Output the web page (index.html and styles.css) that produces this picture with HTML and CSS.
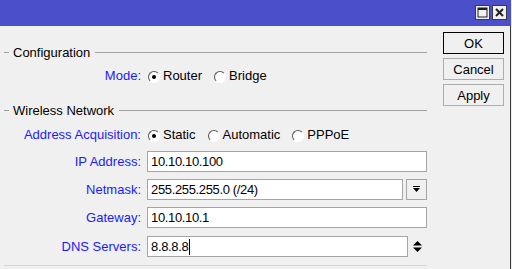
FILE: index.html
```html
<!DOCTYPE html>
<html lang="en">
<head>
    <meta charset="UTF-8">
    <title>Quick Set</title>
    <link rel="stylesheet" href="styles.css">
</head>
<body>
    <div class="window">
        <div class="titlebar">
            <span class="tb-btn">
                <svg width="11" height="11" viewBox="0 0 11 11"><rect x="1" y="1" width="9" height="9" fill="none" stroke="#222" stroke-width="1"/><rect x="1" y="1" width="9" height="2" fill="#222"/></svg>
            </span>
            <span class="tb-btn">
                <svg width="11" height="11" viewBox="0 0 11 11"><path d="M2 2 L9 9 M9 2 L2 9" stroke="#222" stroke-width="2"/></svg>
            </span>
        </div>
        <div class="frame">
            <div class="main">
                <div class="group-head head-config"><span>Configuration</span></div>
                <div class="row row-mode">
                    <label class="lbl">Mode:</label>
                    <div class="radios">
                        <span class="radio checked"><i></i>Router</span>
                        <span class="radio"><i></i>Bridge</span>
                    </div>
                </div>

                <div class="group-head head-wireless"><span>Wireless Network</span></div>
                <div class="row row-acq">
                    <label class="lbl">Address Acquisition:</label>
                    <div class="radios">
                        <span class="radio checked"><i></i>Static</span>
                        <span class="radio"><i></i>Automatic</span>
                        <span class="radio"><i></i>PPPoE</span>
                    </div>
                </div>
                <div class="row row-field">
                    <label class="lbl">IP Address:</label>
                    <div class="field">10.10.10.100</div>
                </div>
                <div class="row row-field">
                    <label class="lbl">Netmask:</label>
                    <div class="field">255.255.255.0 (/24)</div>
                    <span class="drop-btn">
                        <svg width="9" height="9" viewBox="0 0 9 9"><rect x="1" y="1" width="7" height="1" fill="#000"/><path d="M1 3 H8 L4.5 7 Z" fill="#000"/></svg>
                    </span>
                </div>
                <div class="row row-field">
                    <label class="lbl">Gateway:</label>
                    <div class="field">10.10.10.1</div>
                </div>
                <div class="row row-field row-dns">
                    <label class="lbl">DNS Servers:</label>
                    <div class="field">8.8.8.8<span class="caret"></span></div>
                    <span class="spin">
                        <svg width="11" height="13" viewBox="0 0 11 13"><path d="M5.5 1 L10 5.5 H1 Z" fill="#000"/><path d="M1 7.5 H10 L5.5 12 Z" fill="#000"/></svg>
                    </span>
                </div>
                <div class="bottom-line"></div>
            </div>
            <div class="side">
                <button class="btn btn-default">OK</button>
                <button class="btn">Cancel</button>
                <button class="btn">Apply</button>
            </div>
        </div>
    </div>
</body>
</html>
```

FILE: styles.css
```css
body {
    margin: 0;
    background: #f0f0f0;
    font-family: "Liberation Sans", Arial, sans-serif;
    font-size: 13px;
    color: #000000;
}
.window {
    width: 511px;
    height: 269px;
    display: flex;
    flex-direction: column;
}
.titlebar {
    height: 26px;
    background: #4b4fc9;
    display: flex;
    justify-content: flex-end;
    align-items: flex-start;
    padding: 5px 4px 0 0;
    gap: 2px;
    box-sizing: border-box;
}
.tb-btn {
    width: 15px;
    height: 15px;
    box-sizing: border-box;
    border: 1px solid #3a3a3a;
    background: #f0f0f0;
    display: flex;
    justify-content: center;
    align-items: center;
}
.frame {
    flex: 1;
    display: flex;
    border-right: 1px solid #3a3a3a;
}
.main {
    width: 423px;
    margin-left: 4px;
    padding-top: 16px;
}
.group-head {
    height: 20px;
    display: flex;
    align-items: center;
}
.group-head::before {
    content: "";
    width: 5px;
    height: 1px;
    background: #a0a0a0;
    margin-right: 4px;
}
.group-head::after {
    content: "";
    flex: 1;
    height: 1px;
    background: #a0a0a0;
    margin-left: 5px;
}
.head-wireless {
    margin-top: 15px;
}
.row {
    display: flex;
    align-items: center;
}
.row-mode {
    height: 20px;
    margin-top: 3px;
}
.row-acq {
    height: 20px;
    margin-top: 4px;
}
.row-field {
    height: 21px;
    margin-top: 7px;
}
.row-dns {
    margin-top: 8px;
}
.lbl {
    width: 137px;
    flex: none;
    text-align: right;
    color: #1a1aff;
    margin-right: 6px;
}
.radios {
    display: flex;
    gap: 12px;
    padding-left: 1px;
}
.radio {
    display: flex;
    align-items: center;
}
.radio i {
    width: 12px;
    height: 12px;
    box-sizing: border-box;
    border-radius: 50%;
    border: 1px solid;
    border-color: #555555 #ffffff #ffffff #555555;
    background: #ffffff;
    margin-right: 3px;
    margin-top: 3px;
    display: flex;
    justify-content: center;
    align-items: center;
}
.radio.checked i::after {
    content: "";
    width: 4px;
    height: 4px;
    border-radius: 50%;
    background: #000000;
}
.field {
    flex: 1;
    height: 21px;
    box-sizing: border-box;
    border: 1px solid #a5a5a5;
    background: #ffffff;
    padding-left: 3px;
    line-height: 19px;
    letter-spacing: -0.35px;
    display: flex;
    align-items: center;
}
.caret {
    width: 1px;
    height: 16px;
    background: #000000;
    margin-left: 1px;
}
.drop-btn {
    width: 21px;
    height: 21px;
    box-sizing: border-box;
    border: 1px solid #a5a5a5;
    background: #f0f0f0;
    margin-left: 3px;
    display: flex;
    justify-content: center;
    align-items: center;
}
.spin {
    width: 19px;
    display: flex;
    justify-content: center;
    align-items: center;
}
.bottom-line {
    height: 1px;
    background: #d6d6d6;
    margin-top: 8px;
}
.side {
    flex: 1;
    display: flex;
    flex-direction: column;
    gap: 4px;
    padding: 6px 0 0 16px;
}
.btn {
    width: 61px;
    height: 22px;
    padding: 0;
    border: 1px solid #adadad;
    background: #f0f0f0;
    font-family: "Liberation Sans", Arial, sans-serif;
    font-size: 13px;
    color: #000000;
}
.btn-default {
    border-color: #000000;
}
```
